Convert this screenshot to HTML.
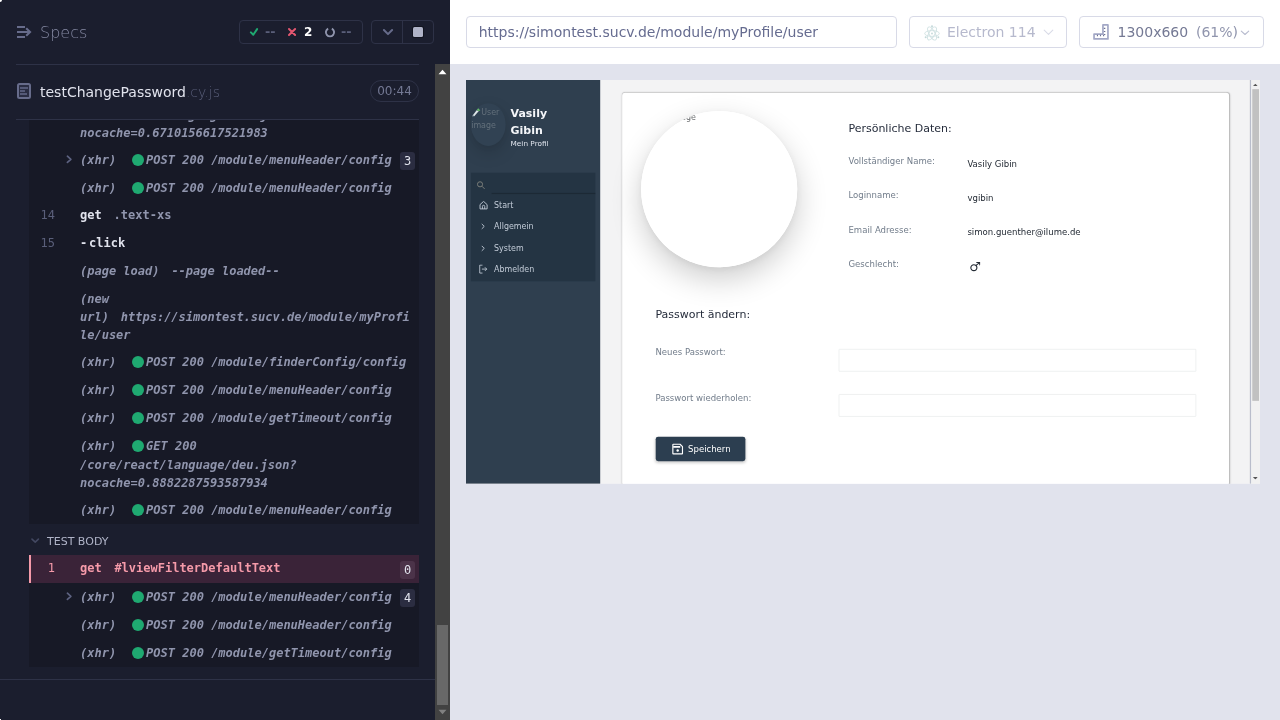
<!DOCTYPE html>
<html lang="en">
<head>
<meta charset="utf-8">
<title>Cypress – testChangePassword.cy.js</title>
<style>
*{box-sizing:border-box}
html,body{margin:0;padding:0}
body{width:1280px;height:720px;overflow:hidden;position:relative;background:#e1e3ed;font-family:"DejaVu Sans","Liberation Sans",sans-serif;color:#d0d2e0}
.abs{position:absolute}
#rep,#hdr,#autw{will-change:transform}
#autw{position:absolute;left:466px;top:80px;width:794px;height:404px;overflow:hidden}
/* ---------- reporter (left) ---------- */
#rep{position:absolute;left:0;top:0;width:450px;height:720px;background:#1b1e2e;overflow:hidden}
#rep .hline{position:absolute;left:16px;width:403px;height:1px;background:#2e3247}
#specs{position:absolute;left:40px;top:22px;font-size:16px;line-height:22px;font-weight:300;color:#8589a3}
#stats{position:absolute;left:239px;top:20px;width:124px;height:24px;border:1px solid #2e3247;border-radius:4px}
#ctrl{position:absolute;left:371px;top:20px;width:63px;height:24px;border:1px solid #2e3247;border-radius:4px}
.dd{position:absolute;top:2px;font-size:12.700px;line-height:18px;font-weight:bold;color:#5a5f7a}
.num{position:absolute;top:2px;font-size:12px;line-height:18px;font-weight:bold;color:#fff}
#ctrl b{position:absolute;left:41px;top:6px;width:10px;height:10px;border-radius:1.5px;background:#afb3c7;box-shadow:0 0 0 1px #12141f}
#ctrl i{position:absolute;left:30px;top:0;width:1px;height:22px;background:#2e3247}
#fname{position:absolute;left:40px;top:81px;font-size:14px;line-height:22px;color:#e1e3ed;white-space:nowrap}
#fname span{color:#5a5f7a;font-weight:300}
#timer{position:absolute;left:370px;top:80px;width:49px;height:22px;border:1px solid #2e3247;border-radius:11px;font-size:12px;line-height:20px;text-align:center;color:#747994}
#sb{position:absolute;left:435px;top:64px;width:15px;height:656px;background:#424242}
#sb .th{position:absolute;left:2px;top:561px;width:11px;height:80px;background:#686868}
/* command log */
#log{position:absolute;left:29px;top:120px;width:390px;height:560px;overflow:hidden}
.blk{position:absolute;left:0;width:390px;background:#171926}
.row{position:absolute;left:0;width:390px;font-family:"DejaVu Sans Mono","Liberation Mono",monospace;font-size:12px;line-height:18px;font-weight:bold;color:#9095ad}
.row .n{position:absolute;left:0;top:0;width:26px;text-align:right;font-weight:normal;color:#5a5f7a}
.row .t{position:absolute;left:51px;top:0;width:335px;white-space:pre-wrap;word-break:break-all}
.ev .t{font-style:italic;color:#9095ad}
.row .m{color:#e1e3ed}
.row .a{color:#9095ad}
.dot{display:inline-block;width:12px;height:12px;border-radius:50%;background:#1fa971;vertical-align:-2px;margin:0 1.700px 0 16.300px}
.g{display:inline-block;width:11.900px}
.dash{display:inline-block;margin-right:1.800px}
.t.c3 .l1{display:block;height:19px}
.fail{position:absolute;left:0;width:390px;height:28px;background:#3a2338;border-left:2px solid #f59aa9}
.badge{position:absolute;left:371px;top:1px;width:15px;height:18px;border-radius:3px;background:#2b2d41;color:#e1e3ed;font-weight:normal;font-style:normal;font-size:12px;line-height:18px;text-align:center}
.chev{position:absolute;left:37.300px;top:3.900px}
#tb{position:absolute;left:18px;font-size:11px;line-height:16px;color:#afb3c7}
/* ---------- right ---------- */
#hdr{position:absolute;left:450px;top:0;width:830px;height:64px;background:#fff}
.box{position:absolute;top:16px;height:32px;border:1px solid #d8dae7;border-radius:4px;background:#fff;font-size:14px;line-height:30px;white-space:nowrap}
#aut{position:absolute;left:0;top:0;width:1303px;height:662px;transform:scale(0.61);transform-origin:0 0;background:#f3f3f4;overflow:hidden;font-size:14px;color:#676a6c}
#side{position:absolute;left:0;top:0;width:220px;height:662px;background:#2f3f4f}
#ava{position:absolute;left:7.500px;top:38px;width:57px;height:70px;border-radius:50%;background:#314253;box-shadow:0 12px 30px rgba(0,0,0,.14),0 3px 10px rgba(0,0,0,.05);color:#63707b;font-size:13px;line-height:18px;overflow:hidden}
#uname{position:absolute;left:73px;top:41px;font-size:18px;line-height:27.500px;font-weight:bold;color:#f4f6f9}
#urole{position:absolute;left:73px;top:95px;font-size:12px;line-height:18px;color:#dfe4ed}
#menu{position:absolute;left:8px;top:152px;width:204px;height:178px;background:#243443}
.mi{position:absolute;left:12px;width:190px;height:35px;font-size:13px;line-height:35px;color:#c3ccd8;padding-left:26px}
.mi svg{position:absolute;left:0;top:9.500px}
#card{position:absolute;left:256px;top:20px;width:995px;height:700px}
#cardbg{position:absolute;left:0;top:1px;width:995px;height:700px;background:#fff;border-radius:5px;box-shadow:0 1px 4px rgba(0,0,0,.15),0 0 1.500px rgba(0,0,0,.18)}
#pic{position:absolute;left:30.500px;top:30.500px;width:256.500px;height:256.500px;border-radius:50%;background:#fff;overflow:hidden;font-size:13px;line-height:18px;color:#676a6c}
#pic span{position:absolute;left:16px;top:2.500px;white-space:nowrap}
#picsh{position:absolute;left:30.500px;top:30.500px;width:256.500px;height:256.500px;border-radius:50%;box-shadow:0 19px 50px rgba(0,0,0,.2),0 3px 12px rgba(0,0,0,.05)}
.h{position:absolute;font-size:18px;line-height:24px;color:#252c3b;white-space:nowrap}
.lb{position:absolute;font-size:14px;line-height:20px;color:#717c8a;white-space:nowrap}
.vl{position:absolute;font-size:14px;line-height:20px;color:#232a34;white-space:nowrap}
.inp{position:absolute;left:354.500px;width:586px;height:37px;border:1.500px solid #e5e8e8;border-radius:1px;background:#fff}
#btn{position:absolute;left:55px;top:565px;width:146.500px;height:39.500px;border-radius:4px;background:#2c3e50;box-shadow:0 2px 5px rgba(0,0,0,.2);color:#fff;font-size:14px;line-height:39px}
#btn span{position:absolute;left:53px;top:1px}
#asb{position:absolute;left:1285px;top:0;width:18px;height:662px;background:#f1f1f1}
#asb i{position:absolute;left:0;top:0;width:1.500px;height:662px;background:#b9bdcb}
#asb b{position:absolute;left:3.500px;top:15px;width:11.800px;height:511px;background:#c1c1c1}
</style>
</head>
<body>
<div id="rep">
  <svg class="abs" style="left:16px;top:24px" width="17" height="16" viewBox="0 0 17 16"><path d="M1 3h8M1 8h12M1 13h8" stroke="#676c8b" stroke-width="2" fill="none"/><path d="M10.2 4.200l3.900 3.800-3.900 3.800" stroke="#676c8b" stroke-width="2" fill="none" stroke-linejoin="miter"/></svg>
  <div id="specs">Specs</div>
  <div id="stats">
    <svg class="abs" style="left:9px;top:6px" width="12" height="12" viewBox="0 0 12 12"><path d="M1.9 5.4L4.300 7.800 8.100 2.100" fill="none" stroke="#1fa971" stroke-width="2" stroke-linecap="round" stroke-linejoin="round"/></svg>
    <span class="dd" style="left:25px">--</span>
    <svg class="abs" style="left:47px;top:6px" width="12" height="12" viewBox="0 0 12 12"><path d="M2 2L8.100 8M8.100 2L2 8" fill="none" stroke="#e45770" stroke-width="2" stroke-linecap="round"/></svg>
    <span class="num" style="left:64px">2</span>
    <svg class="abs" style="left:84px;top:5px" width="14" height="14" viewBox="0 0 14 14"><path d="M4.150 2.640A4.100 4.100 0 1 0 7.850 2.640" fill="none" stroke="#9095ad" stroke-width="1.900" stroke-linecap="butt"/></svg>
    <span class="dd" style="left:101px">--</span>
  </div>
  <div id="ctrl"><i></i>
    <svg class="abs" style="left:9px;top:7px" width="14" height="10" viewBox="0 0 14 10"><path d="M2.900 2l4.100 4.100L11.100 2" fill="none" stroke="#676c8b" stroke-width="2" stroke-linecap="round" stroke-linejoin="round"/></svg>
    <b></b>
  </div>
  <div class="hline" style="top:64px"></div>
  <svg class="abs" style="left:16px;top:82px" width="16" height="18" viewBox="0 0 16 18"><rect x="2" y="2" width="12" height="14" rx="1.5" fill="#2a2d43" stroke="#676c8b" stroke-width="2"/><path d="M4 6h8M4 9h5M4 12h7" stroke="#555a78" stroke-width="1.8" fill="none"/></svg>
  <div id="fname">testChangePassword<span>.cy.js</span></div>
  <div id="timer">00:44</div>
  <div class="hline" style="top:119px"></div>
  <div id="log">
<div class="blk" style="top:0;height:404px"></div>
<div class="blk" style="top:435px;height:112px"></div>
<div class="row ev" style="top:-33px"><div class="t c3"><span class="l1"><span class="ms">(xhr)</span><span class="dot"></span>GET 200</span>/core/react/language/deu.json?
nocache=0.6710156617521983</div></div>
<div class="row ev" style="top:31px"><svg class="chev" width="7" height="9" viewBox="0 0 7 9"><path d="M1.400 1.200L4.900 4.300 1.400 7.400" fill="none" stroke="#5d6281" stroke-width="1.700" stroke-linecap="round" stroke-linejoin="round"/></svg><div class="t"><span class="ms">(xhr)</span><span class="dot"></span>POST 200 /module/menuHeader/config</div><span class="badge">3</span></div>
<div class="row ev" style="top:59px"><div class="t"><span class="ms">(xhr)</span><span class="dot"></span>POST 200 /module/menuHeader/config</div></div>
<div class="row" style="top:86px"><span class="n">14</span><div class="t"><span class="m">get</span><span class="g"> </span><span class="a">.text-xs</span></div></div>
<div class="row" style="top:114px"><span class="n">15</span><div class="t"><span class="m"><span class="dash">-</span>click</span></div></div>
<div class="row ev" style="top:142px"><div class="t"><span>(page load)</span><span class="g"> </span>--page loaded--</div></div>
<div class="row ev" style="top:170px"><div class="t"><span>(new
url)</span><span class="g"> </span>https://simontest.sucv.de/module/myProfi
le/user</div></div>
<div class="row ev" style="top:233px"><div class="t"><span class="ms">(xhr)</span><span class="dot"></span>POST 200 /module/finderConfig/config</div></div>
<div class="row ev" style="top:261px"><div class="t"><span class="ms">(xhr)</span><span class="dot"></span>POST 200 /module/menuHeader/config</div></div>
<div class="row ev" style="top:289px"><div class="t"><span class="ms">(xhr)</span><span class="dot"></span>POST 200 /module/getTimeout/config</div></div>
<div class="row ev" style="top:317px"><div class="t c3"><span class="l1"><span class="ms">(xhr)</span><span class="dot"></span>GET 200</span>/core/react/language/deu.json?
nocache=0.8882287593587934</div></div>
<div class="row ev" style="top:381px"><div class="t"><span class="ms">(xhr)</span><span class="dot"></span>POST 200 /module/menuHeader/config</div></div>
<svg class="abs" style="left:1.700px;top:418px" width="9" height="6" viewBox="0 0 9 6"><path d="M1 1.100l3.200 3 3.200-3" fill="none" stroke="#434861" stroke-width="1.6" stroke-linecap="round" stroke-linejoin="round"/></svg>
<div id="tb" style="top:414px">TEST BODY</div>
<div class="fail" style="top:435px"></div>
<div class="row" style="top:438.5px;color:#f59aa9"><span class="n" style="color:#f59aa9">1</span><div class="t"><span>get</span><span class="g" style="width:12.700px"> </span><span>#lviewFilterDefaultText</span></div><span class="badge" style="top:2.5px;background:#4b3349">0</span></div>
<div class="row ev" style="top:468px"><svg class="chev" width="7" height="9" viewBox="0 0 7 9"><path d="M1.400 1.200L4.900 4.300 1.400 7.400" fill="none" stroke="#5d6281" stroke-width="1.700" stroke-linecap="round" stroke-linejoin="round"/></svg><div class="t"><span class="ms">(xhr)</span><span class="dot"></span>POST 200 /module/menuHeader/config</div><span class="badge">4</span></div>
<div class="row ev" style="top:496px"><div class="t"><span class="ms">(xhr)</span><span class="dot"></span>POST 200 /module/menuHeader/config</div></div>
<div class="row ev" style="top:524px"><div class="t"><span class="ms">(xhr)</span><span class="dot"></span>POST 200 /module/getTimeout/config</div></div>
</div>
  <div class="abs" style="left:0;top:679px;width:435px;height:1px;background:#2e3247"></div>
  <div id="sb"><div class="th"></div>
    <svg class="abs" style="left:3px;top:5px" width="9" height="6" viewBox="0 0 9 6"><path d="M0.500 5.200L4.500 0.800 8.500 5.200z" fill="#fff"/></svg>
    <svg class="abs" style="left:3px;top:645px" width="9" height="6" viewBox="0 0 9 6"><path d="M0.500 0.800L4.500 5.200 8.500 0.800z" fill="#808080"/></svg>
  </div>
</div>
<div class="abs" style="left:-2px;top:-2px;width:4px;height:4px;border-radius:50%;background:#fff;z-index:9"></div>
<div class="abs" style="left:-1px;top:719px;width:2px;height:2px;background:#fff;z-index:9"></div>
<div id="hdr">
  <div class="box" style="left:16px;width:431px;padding-left:11.700px;color:#666c90">https://simontest.sucv.de/module/myProfile/user</div>
  <div class="box" style="left:459px;width:158px;color:#b6b9cd">
    <svg class="abs" style="left:13.500px;top:7.500px" width="16" height="17" viewBox="0 0 16 17" fill="none" stroke="#cfe1e2" stroke-width="0.900"><ellipse cx="8" cy="8.500" rx="7.300" ry="2.900" transform="rotate(60 8 8.500)"/><ellipse cx="8" cy="8.500" rx="7.300" ry="2.900" transform="rotate(-60 8 8.500)"/><ellipse cx="8" cy="8.500" rx="2.900" ry="7.300" transform="rotate(90 8 8.500)"/><circle cx="8" cy="8.500" r="0.900" fill="#c3d9da" stroke="none"/><circle cx="8" cy="1.200" r="1" fill="#c3d9da" stroke="none"/><circle cx="1.700" cy="12.200" r="1" fill="#c3d9da" stroke="none"/><circle cx="14.300" cy="12.200" r="1" fill="#c3d9da" stroke="none"/></svg>
    <span class="abs" style="left:37px;top:0">Electron 114</span>
    <svg class="abs" style="left:133px;top:12px" width="11" height="7" viewBox="0 0 11 7"><path d="M1.2 1.2l4.3 4.2 4.3-4.2" fill="none" stroke="#d9dbe7" stroke-width="1.100" stroke-linecap="round" stroke-linejoin="round"/></svg>
  </div>
  <div class="box" style="left:629px;width:185px;color:#747994">
    <svg class="abs" style="left:13px;top:7px" width="17" height="17" viewBox="0 0 17 17" fill="none" stroke="#a3a8c6" stroke-width="1.700" stroke-linejoin="round"><path d="M9.950 0.950H14.950V14.950H1.050V10.050H9.950z"/><path d="M4.450 10.700v1.600M7.500 10.700v1.600M10.600 10.700v1.600M10.900 4.400h1.400M10.900 7.500h1.400M10.900 10.500h1.400" stroke="#6b7092" stroke-width="1.100"/></svg>
    <span class="abs" style="left:37.5px;top:0">1300x660</span><span class="abs" style="left:116px;top:0;color:#9095ad">(61%)</span>
    <svg class="abs" style="left:160px;top:12.5px" width="11" height="7" viewBox="0 0 11 7"><path d="M1.300 1.200l3.700 3.300 3.700-3.300" fill="none" stroke="#b7bbce" stroke-width="1.100" stroke-linecap="round" stroke-linejoin="round"/></svg>
  </div>
</div>
<div id="autw"><div id="aut">
  <div id="side">
    <div id="ava"><svg class="abs" style="left:1px;top:7px" width="16" height="16" viewBox="0 0 16 16"><path d="M1.500 13.500L8.500 4.500l3.500 1.500-7.500 8.500z" fill="#dfe6e9"/><path d="M8.500 4.500l2.500-3 3.500 3.500-2.500 1z" fill="#66bb6a"/><path d="M1 15l1-3.500 2.500 2.500z" fill="#90a4ae"/></svg><span class="abs" style="left:17.500px;top:6px">User</span><span class="abs" style="left:1px;top:27.500px">image</span></div>
    <div id="uname">Vasily<br>Gibin</div>
    <div id="urole">Mein Profil</div>
    <div id="menu">
      <svg class="abs" style="left:9px;top:13px" width="15" height="15" viewBox="0 0 15 15" fill="none" stroke="#7b7e7a" stroke-width="1.600"><circle cx="6" cy="6" r="4.200"/><path d="M9.2 9.2l4.3 4.3"/></svg>
      <div class="abs" style="left:34px;top:33px;width:170px;height:2px;background:#1c2935"></div>
      <div class="mi" style="top:36px"><svg width="17" height="16" viewBox="0 0 17 16" fill="none" stroke="#c3ccd8" stroke-width="1.500" stroke-linejoin="round" style="top:10px"><path d="M3 6.300L8.800 1l5.800 5.300V13.300H3z"/><path d="M6.900 13.300V9.300a1.900 1.900 0 0 1 3.800 0V13.300"/></svg>Start</div>
      <div class="mi" style="top:70px"><svg width="16" height="16" viewBox="0 0 16 16" fill="none" stroke="#c3ccd8" stroke-width="1.500" stroke-linecap="round" stroke-linejoin="round"><path d="M6.300 4.400l3.600 3.600-3.600 3.600"/></svg>Allgemein</div>
      <div class="mi" style="top:106px"><svg width="16" height="16" viewBox="0 0 16 16" fill="none" stroke="#c3ccd8" stroke-width="1.500" stroke-linecap="round" stroke-linejoin="round"><path d="M6.300 4.400l3.600 3.600-3.600 3.600"/></svg>System</div>
      <div class="mi" style="top:140.300px"><svg width="16" height="16" viewBox="0 0 16 16" fill="none" stroke="#c3ccd8" stroke-width="1.4" stroke-linejoin="round"><path d="M7 1.5H2.5v13H7"/><path d="M6 8h8M11 5l3 3-3 3"/></svg>Abmelden</div>
    </div>
  </div>
  <div id="card"><div id="cardbg"></div><div id="picsh"></div>
    <div id="pic"><span>User image</span></div>
    <div class="h" style="left:371px;top:47px">Persönliche Daten:</div>
    <div class="lb" style="left:371px;top:102.600px">Vollständiger Name:</div><div class="vl" style="left:566px;top:107.800px">Vasily Gibin</div>
    <div class="lb" style="left:371px;top:159px">Loginname:</div><div class="vl" style="left:566px;top:163.500px">vgibin</div>
    <div class="lb" style="left:371px;top:215.400px">Email Adresse:</div><div class="vl" style="left:566px;top:219.200px">simon.guenther@ilume.de</div>
    <div class="lb" style="left:371px;top:271.800px">Geschlecht:</div><div class="vl" style="left:568.800px;top:275.600px;font-size:21px">♂</div>
    <div class="h" style="left:54.500px;top:351.800px">Passwort ändern:</div>
    <div class="lb" style="left:54.500px;top:415.300px">Neues Passwort:</div><div class="inp" style="top:420.500px"></div>
    <div class="lb" style="left:54.500px;top:490.700px">Passwort wiederholen:</div><div class="inp" style="top:494.500px"></div>
    <div id="btn"><svg class="abs" style="left:26px;top:9.500px" width="20" height="20" viewBox="0 0 19 19" fill="none" stroke="#fff" stroke-width="1.8" stroke-linejoin="round"><path d="M2 2.700A0.700 0.700 0 0 1 2.700 2H13.200l3.800 3.800v10.500A0.700 0.700 0 0 1 16.300 17H2.700A0.700 0.700 0 0 1 2 16.300z"/><path d="M2.500 6h11" stroke-width="2.600"/><circle cx="9.500" cy="11.800" r="1.900" fill="#fff" stroke="none"/></svg><span>Speichern</span></div>
  </div>
  <div id="asb"><i></i><b></b>
    <svg class="abs" style="left:5px;top:6px" width="8" height="4" viewBox="0 0 8 4"><path d="M0 4l4-4 4 4z" fill="#555"/></svg>
    <svg class="abs" style="left:5px;top:651px" width="8" height="4" viewBox="0 0 8 4"><path d="M0 0l4 4 4-4z" fill="#555"/></svg>
  </div>
</div></div>
</body>
</html>
